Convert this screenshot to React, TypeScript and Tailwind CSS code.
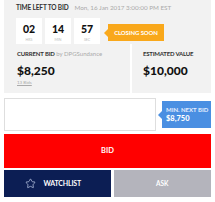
import { Star } from 'lucide-react';

const font = { fontFamily: 'Lato, "Open Sans", sans-serif' };

function TimeBox({ value, label }: { value: string; label: string }) {
  return (
    <div className="flex h-[26px] w-[26px] flex-col items-center bg-white">
      <span className="mt-[5px] text-[10.5px] font-black leading-[12px] text-[#111]">{value}</span>
      <span className="mt-[3px] text-[3.5px] leading-[4px] text-[#bbb]">{label}</span>
    </div>
  );
}

export default function App() {
  return (
    <div className="flex h-[202px] w-[215px] flex-col bg-white px-[4px]" style={font}>
      {/* auction info panel */}
      <div className="flex h-[93px] flex-col bg-[#f2f2f2]">
        <div className="pl-[12px] pt-[3px]">
          <div className="flex items-baseline gap-[6px] whitespace-nowrap">
            <span className="text-[6.5px] font-bold tracking-[-0.15px] text-[#333]">TIME LEFT TO BID</span>
            <span className="text-[6.3px] text-[#aaa]">Mon, 16 Jan 2017 3:00:00 PM EST</span>
          </div>
          <div className="mt-[5px] flex items-center">
            <div className="flex gap-[3px]">
              <TimeBox value="02" label="HRS" />
              <TimeBox value="14" label="MIN" />
              <TimeBox value="57" label="SEC" />
            </div>
            <div className="relative ml-[8px] mt-[4px] flex h-[17px] w-[56px] items-center justify-center bg-[#f9a81b]">
              <div className="absolute left-[-4px] top-[4.5px] h-0 w-0 border-y-[4px] border-r-[4px] border-y-transparent border-r-[#f9a81b]" />
              <span className="text-[6px] font-bold tracking-[-0.1px] text-white">CLOSING SOON</span>
            </div>
          </div>
        </div>
        <div className="flex flex-1">
          <div className="w-[126px] pl-[13px] pt-[6px]">
            <div className="whitespace-nowrap text-[6px] leading-[8px]">
              <span className="font-bold tracking-[-0.15px] text-[#333]">CURRENT BID</span>{' '}
              <span className="text-[#aaa]">by DPGSundance</span>
            </div>
            <div className="mt-[6px] text-[12px] font-black leading-[14px] text-[#111]">$8,250</div>
            <div className="mt-[2px] text-[4.5px] leading-[5px] text-[#aaa] underline">13 Bids</div>
          </div>
          <div className="w-[2px] bg-white" />
          <div className="flex-1 pl-[11px] pt-[6px]">
            <div className="whitespace-nowrap text-[6px] font-bold leading-[8px] tracking-[-0.2px] text-[#333]">ESTIMATED VALUE</div>
            <div className="mt-[6px] text-[12px] font-black leading-[14px] text-[#111]">$10,000</div>
          </div>
        </div>
      </div>

      {/* bid input */}
      <div className="mt-[5px] flex items-center">
        <input className="h-[33px] w-[152px] border border-[#dedede] bg-white outline-none" />
        <div className="relative ml-[6px] flex h-[27px] flex-1 flex-col justify-center bg-[#4a8fe2] pl-[4px]">
          <div className="absolute left-[-4px] top-[9.5px] h-0 w-0 border-y-[4px] border-r-[4px] border-y-transparent border-r-[#4a8fe2]" />
          <span className="whitespace-nowrap text-[6px] font-bold leading-[8px] text-[#e6efff]">MIN. NEXT BID</span>
          <span className="text-[7.5px] font-black leading-[10px] text-white">$8,750</span>
        </div>
      </div>

      {/* actions */}
      <button className="mt-[3px] flex h-[34px] items-center justify-center bg-[#ff0000] text-[7.5px] font-bold text-white">
        BID
      </button>
      <div className="mt-[2px] flex h-[27px] gap-[3px]">
        <button className="flex flex-1 items-center justify-center gap-[8px] bg-[#0c1e54] pr-[9px] text-[7px] font-bold tracking-[-0.2px] text-white">
          <Star size={11} strokeWidth={1.5} className="text-[#c8d4ef]" />
          WATCHLIST
        </button>
        <button className="flex flex-1 items-center justify-center bg-[#b4b4bc] text-[6.5px] font-bold text-white">
          ASK
        </button>
      </div>
    </div>
  );
}
